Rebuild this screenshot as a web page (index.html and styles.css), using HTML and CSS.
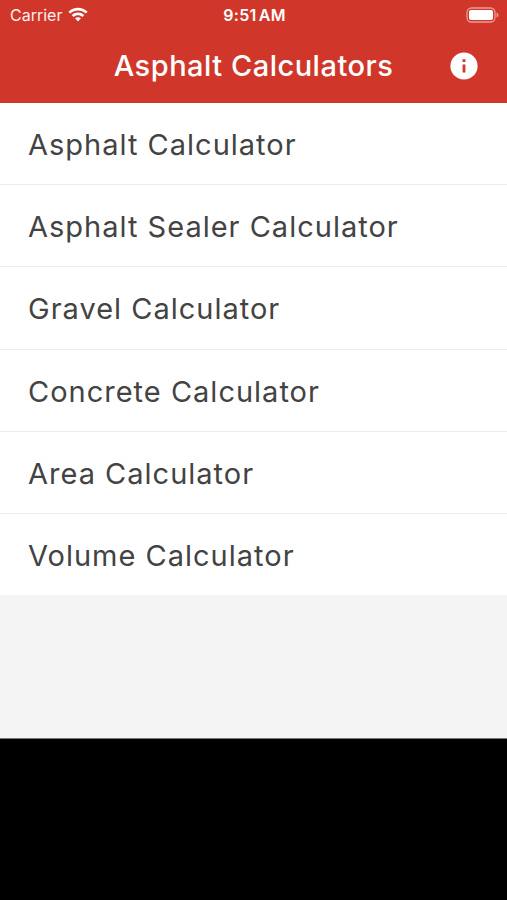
FILE: index.html
```html
<!DOCTYPE html>
<html lang="en">
<head>
<meta charset="utf-8">
<title>Asphalt Calculators</title>
<link rel="stylesheet" href="styles.css">
</head>
<body>
<header class="header">
  <div class="status">
    <div class="carrier"><span class="carrier-name">Carrier</span>
      <svg class="wifi" viewBox="0 0 20 15" width="20" height="15"><path d="M0.4 4.7C5.7-.5 14.3-.5 19.6 4.7L17.8 6.5C13.4 2.5 6.6 2.5 2.2 6.5ZM3.7 8C7.2 4.7 12.8 4.7 16.3 8L14.4 9.9C11.8 7.6 8.2 7.6 5.6 9.9ZM7 11.3C8.7 9.8 11.3 9.8 13 11.3L10 14.4Z"/></svg>
    </div>
    <time class="clock">9:51 AM</time>
    <svg class="battery" viewBox="0 0 33 16" width="33" height="16"><rect class="battery-shell" x="1" y="1" width="28" height="14" rx="4.5"/><rect x="3" y="3" width="24" height="10" rx="2"/><path class="battery-tip" d="M30.5 5.5Q32.5 6 32.5 8T30.5 10.5Z"/></svg>
  </div>
  <div class="bar">
    <h1 class="title">Asphalt Calculators</h1>
    <svg class="info" viewBox="0 0 28 28" width="28" height="28"><circle cx="14" cy="14" r="13.6"/><path class="info-mark" d="M12.6 7.2h2.8V10h-2.8ZM12.6 12.4h2.8v8.2h-2.8Z"/></svg>
  </div>
</header>
<ul class="list">
  <li class="row"><span class="label">Asphalt Calculator</span></li>
  <li class="row"><span class="label">Asphalt Sealer Calculator</span></li>
  <li class="row"><span class="label">Gravel Calculator</span></li>
  <li class="row"><span class="label">Concrete Calculator</span></li>
  <li class="row"><span class="label">Area Calculator</span></li>
  <li class="row"><span class="label">Volume Calculator</span></li>
</ul>
<footer class="footer"></footer>
</body>
</html>
```
FILE: styles.css
```css
* { box-sizing: border-box; }
body { margin: 0; height: 900px; display: flex; flex-direction: column; overflow: hidden; background: #f4f4f4; font-family: Inter, "Liberation Sans", sans-serif; color: #434343; }
.header { height: 103px; background: #d0372a; color: #fff; }
.status { height: 29px; display: grid; grid-template-columns: 1fr auto 1fr; align-items: center; padding: 0 8px 0 10px; }
.carrier { display: flex; align-items: center; gap: 6px; }
.carrier-name { font-size: 16px; letter-spacing: 0; opacity: .93; }
.clock { font-size: 16px; font-weight: 600; letter-spacing: .3px; word-spacing: -2.2px; white-space: nowrap; }
.battery { justify-self: end; }
svg { fill: #fff; display: block; }
.wifi { margin-bottom: 1px; }
.battery-shell { fill: none; stroke: #fff; stroke-opacity: .5; stroke-width: 1.3; }
.battery-tip { fill-opacity: .5; }
.bar { height: 74px; display: grid; grid-template-columns: 1fr auto 1fr; align-items: center; padding: 0 29px; }
.title { grid-column: 2; margin: 0; font-size: 29px; line-height: 36px; font-weight: 500; letter-spacing: .5px; white-space: nowrap; }
.info { justify-self: end; }
.info-mark { fill: #d0372a; }
.list { list-style: none; margin: 0; padding: 0; background: #fff; }
.row { height: 82.2px; display: flex; align-items: center; padding: 3px 28px 0; border-bottom: 1px solid #ebebeb; }
.row:last-child { border-bottom-color: #f4f4f4; }
.label { font-size: 29px; line-height: 36px; font-weight: 430; letter-spacing: 1px; white-space: nowrap; }
.footer { height: 162px; margin-top: auto; background: #000; border-top: 1px solid #777; }
```
